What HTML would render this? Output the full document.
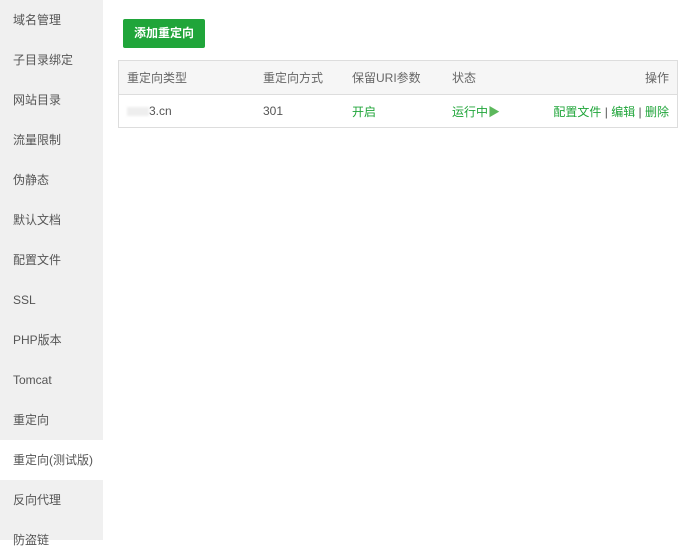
<!DOCTYPE html><html><head><meta charset="utf-8"><style>
body{margin:0;width:692px;height:540px;overflow:hidden;background:#fff;font-family:"Liberation Sans","Noto Sans CJK SC",sans-serif;font-size:12px;color:#555;position:relative}
.side{position:absolute;left:0;top:0;width:103px;height:540px;background:#f0f0f0}
.side div{height:40px;line-height:40px;padding-left:13px;color:#555}
.side .on{background:#fff}
.btn{position:absolute;left:123px;top:19px;width:82px;height:29px;background:#20a53a;color:#fff;border-radius:2px;line-height:29px;text-align:center;font-weight:bold}
table{position:absolute;left:118px;top:60px;width:560px;border-collapse:collapse;border:1px solid #ddd}
th{background:#f6f6f6;font-weight:normal;text-align:left;height:33px;padding:0 8px;color:#666;border-bottom:1px solid #ddd}
td{height:32px;padding:0 8px}
.g{color:#20a53a}
</style></head><body>
<div class="side"><div>域名管理</div><div>子目录绑定</div><div>网站目录</div><div>流量限制</div><div>伪静态</div><div>默认文档</div><div>配置文件</div><div>SSL</div><div>PHP版本</div><div>Tomcat</div><div>重定向</div><div class="on">重定向(测试版)</div><div>反向代理</div><div>防盗链</div></div>
<div class="btn">添加重定向</div>
<table><tr><th style="width:120px">重定向类型</th><th style="width:73px">重定向方式</th><th style="width:84px">保留URI参数</th><th>状态</th><th style="text-align:right">操作</th></tr>
<tr><td><span style="display:inline-block;width:22px;height:9px;background:#eee;vertical-align:middle;filter:blur(1px)"></span>3.cn</td><td>301</td><td class="g">开启</td><td class="g">运行中<span style="color:#5cb85c">▶</span></td><td class="g" style="text-align:right">配置文件 <span style="color:#555">|</span> 编辑 <span style="color:#555">|</span> 删除</td></tr></table>
</body></html>
